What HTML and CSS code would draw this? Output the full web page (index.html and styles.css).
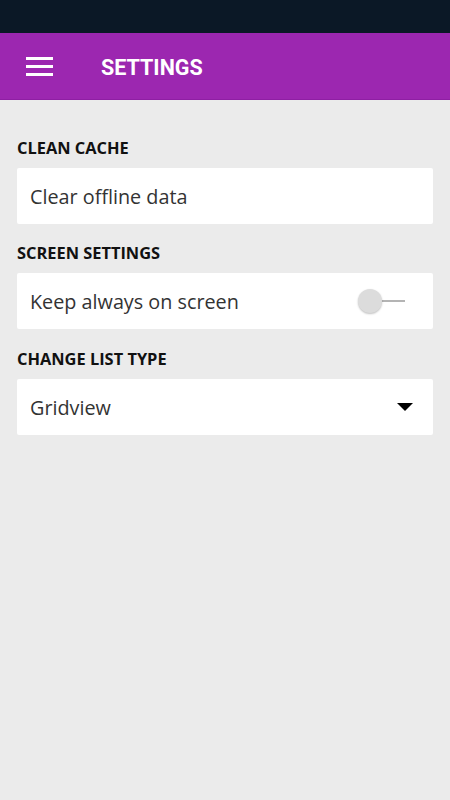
FILE: index.html
```html
<!DOCTYPE html>
<html lang="en">
<head>
    <meta charset="UTF-8">
    <meta name="viewport" content="width=device-width, initial-scale=1.0">
    <title>Settings</title>
    <link rel="stylesheet" href="styles.css">
</head>
<body>
    <div class="status-bar"></div>

    <header class="app-bar">
        <button class="menu-btn" aria-label="Menu">
            <svg width="28" height="20" viewBox="0 0 28 20">
                <rect x="0" y="1" width="27" height="3" fill="#fff"/>
                <rect x="0" y="9" width="27" height="3" fill="#fff"/>
                <rect x="0" y="17" width="27" height="3" fill="#fff"/>
            </svg>
        </button>
        <h1 class="app-title">SETTINGS</h1>
    </header>

    <main class="settings">
        <section class="group">
            <h2 class="group-label">CLEAN CACHE</h2>
            <div class="card">Clear offline data</div>
        </section>

        <section class="group">
            <h2 class="group-label">SCREEN SETTINGS</h2>
            <div class="card">
                <span>Keep always on screen</span>
                <span class="switch">
                    <span class="switch-track"></span>
                    <span class="switch-thumb"></span>
                </span>
            </div>
        </section>

        <section class="group last">
            <h2 class="group-label">CHANGE LIST TYPE</h2>
            <div class="card">
                <span>Gridview</span>
                <span class="caret"></span>
            </div>
        </section>
    </main>
</body>
</html>
```

FILE: styles.css
```css
body {
    margin: 0;
    background: #ebebeb;
    font-family: "Open Sans", sans-serif;
    height: 800px;
}
.status-bar { height: 33px; background: #0b1826; }
.app-bar {
    height: 67px;
    background: #9c27b0;
    border-bottom: 1px solid #8e1fa3;
    display: flex;
    align-items: center;
    box-sizing: border-box;
}
.menu-btn {
    background: none;
    border: none;
    padding: 0;
    margin-left: 26px;
    width: 28px;
    height: 20px;
    display: flex;
}
.app-title {
    margin: 3px 0 0 47px;
    color: #fff;
    font-family: Roboto, sans-serif;
    font-weight: 700;
    font-size: 21.5px;
}
.settings { padding: 0 17px; }
.group-label {
    margin: 0;
    padding: 19px 0 10px;
    font-size: 16.4px;
    font-weight: 700;
    line-height: 20px;
    color: #111;
}
.group:first-child .group-label { padding-top: 38px; }
.group.last .group-label { padding-top: 20px; }
.card {
    background: #fff;
    border-radius: 2px;
    height: 56px;
    padding: 0 20px 0 13px;
    display: flex;
    align-items: center;
    justify-content: space-between;
    font-size: 19.8px;
    color: #333;
}
.switch {
    position: relative;
    width: 48px;
    height: 26px;
    margin-right: 8px;
}
.switch-track {
    position: absolute;
    left: 14px;
    right: 0;
    top: 12px;
    height: 2px;
    background: #b4b4b4;
}
.switch-thumb {
    position: absolute;
    left: 1px;
    top: 1px;
    width: 24px;
    height: 24px;
    border-radius: 50%;
    background: #dcdcdc;
    box-shadow: 0 1px 2px rgba(0, 0, 0, 0.25);
}
.caret {
    width: 0;
    height: 0;
    border-left: 8px solid transparent;
    border-right: 8px solid transparent;
    border-top: 8px solid #000;
}
```
